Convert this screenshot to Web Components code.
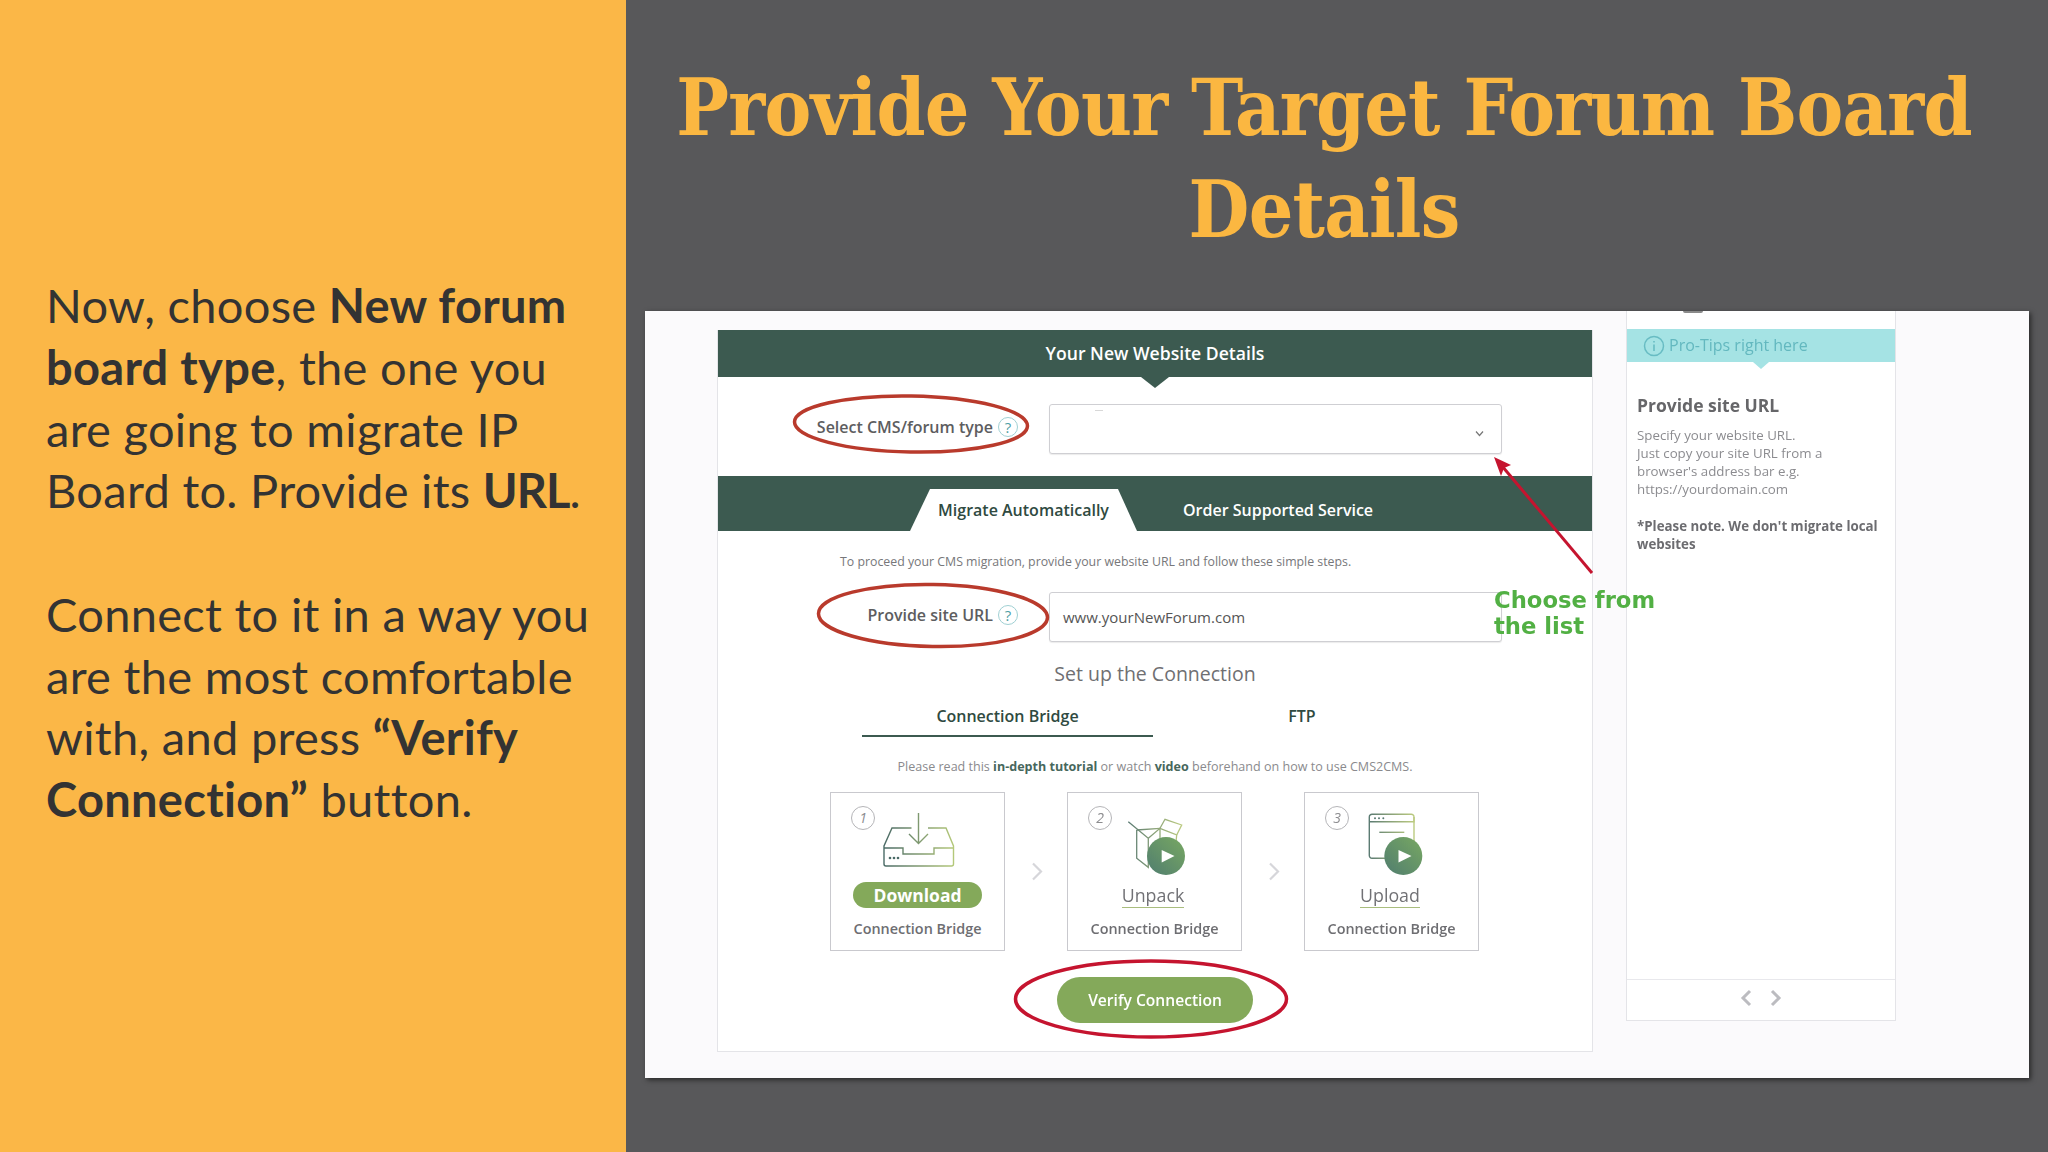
<!DOCTYPE html>
<html>
<head>
<meta charset="utf-8">
<title>Provide Your Target Forum Board Details</title>
<style>
html,body{margin:0;padding:0;background:#58585a;}
</style>
</head>
<body>
<migration-slide>
  <side-note slot="side">
    <p>Now, choose <b>New forum<br>board type</b>, the one you<br>are going to migrate IP<br>Board to. Provide its <b style="letter-spacing:-1px">URL</b>.</p>
    <p>Connect to it in a way you<br>are the most comfortable<br>with, and press <b>“Verify<br>Connection”</b> button.</p>
  </side-note>
  <slide-title slot="title">Provide Your Target Forum Board<br>Details</slide-title>
  <wizard-shot slot="shot">
    <wizard-form></wizard-form>
    <tips-panel slot="tips"></tips-panel>
  </wizard-shot>
</migration-slide>

<script>
function define(name, html){
    const tpl = document.createElement('template');
    tpl.innerHTML = html;
    customElements.define(name, class extends HTMLElement{
        constructor(){
            super();
            this.attachShadow({mode: 'open'});
            this.shadowRoot.appendChild(tpl.content.cloneNode(true));
        }
    });
}

define('migration-slide', `
<style>
:host{display:grid;grid-template-columns:626px 1422px;width:2048px;height:1152px;overflow:hidden;}
.right{background:#58585a;display:flex;flex-direction:column;padding-left:19px;}
</style>
<slot name="side"></slot>
<div class="right">
  <slot name="title"></slot>
  <slot name="shot"></slot>
</div>`);

define('side-note', `
<style>
:host{display:block;box-sizing:border-box;background:#fbb747;color:#333;padding:275px 0 0 46px;
  font:400 47px/61.75px Lato,sans-serif;letter-spacing:.3px;}
::slotted(p){margin:0 0 61.75px;}
</style>
<slot></slot>`);

define('slide-title', `
<style>
:host{display:block;height:311px;box-sizing:border-box;margin-left:-19px;padding:57px 26px 0 0;text-align:center;
  color:#fbb741;font:700 78px/102px "DejaVu Serif Condensed","DejaVu Serif",serif;letter-spacing:-.76px;}
</style>
<slot></slot>`);

define('wizard-shot', `
<style>
:host{display:flex;position:relative;align-items:flex-start;width:1384px;box-sizing:border-box;padding:19px 0 26px 72px;
  gap:33px;background:#fbfafc;box-shadow:2px 2px 5px rgba(0,0,0,.55);filter:blur(.45px);}
.notes{position:absolute;inset:0;pointer-events:none;}
.notes svg{position:absolute;left:0;top:0;}
.hint{position:absolute;left:849px;top:276px;color:#52b044;font:700 22.7px/26px "DejaVu Sans",sans-serif;}
</style>
<slot></slot>
<slot name="tips"></slot>
<div class="notes">
  <svg width="1384" height="757" viewBox="0 0 1384 757" fill="none">
    <ellipse cx="266" cy="113" rx="116.5" ry="28" stroke="#b93a2c" stroke-width="3.5" transform="rotate(1 266 113)"/>
    <ellipse cx="288" cy="304.5" rx="114.5" ry="31" stroke="#b93a2c" stroke-width="3.5" transform="rotate(1 288 304)"/>
    <ellipse cx="506" cy="688" rx="135.5" ry="38" stroke="#c5142f" stroke-width="3.5"/>
    <path d="M947 262L857 155" stroke="#c5142f" stroke-width="3"/>
    <path d="M849 146L866 154L859 157L856 165Z" fill="#c5142f"/>
  </svg>
  <div class="hint">Choose from<br>the list</div>
</div>`);

define('help-mark', `
<style>
:host{display:inline-flex;align-items:center;justify-content:center;box-sizing:border-box;width:20px;height:20px;
  border:1px solid #9fd0d3;border-radius:50%;color:#4f9fa5;font:400 15px/1 "Open Sans",sans-serif;flex:none;}
</style>?`);

define('wizard-form', `
<style>
:host{display:block;box-sizing:border-box;width:876px;height:722px;background:#fff;border:solid #e4e4e8;border-width:0 1px 1px 1px;
  font-family:"Open Sans",sans-serif;color:#6b6b6e;}
.head{position:relative;height:47px;background:#3c5a50;color:#fff;font:600 17.6px/47px "Open Sans",sans-serif;text-align:center;}
.head::after{content:"";position:absolute;left:50%;top:47px;margin-left:-14px;border:solid transparent;border-width:11px 14px 0;border-top-color:#3c5a50;}
.row{display:grid;grid-template-columns:331px 453px;height:50px;}
.row.first{margin-top:27px;}
.row.second{margin-top:21px;}
.label{display:flex;align-items:center;justify-content:flex-end;gap:5px;padding:0 31px 4px 0;font:600 16px/20px "Open Sans",sans-serif;color:#5d5d60;}
.field{box-sizing:border-box;border:1px solid #cfcfd3;border-radius:3px;box-shadow:0 1px 1px rgba(0,0,0,.08);display:flex;background:#fff;
  font:400 15px/48px "Open Sans",sans-serif;color:#555;padding-left:13px;}
.select{position:relative;}
.select i{display:block;width:8px;height:1px;background:#d8d8d8;margin:5px 0 0 32px;}
.select svg{position:absolute;right:17px;top:25px;}
.band{display:flex;align-items:flex-end;margin-top:22px;height:55px;background:#3c5a50;padding-left:192px;}
.tab{width:227px;height:42px;box-sizing:border-box;background:#fff;clip-path:polygon(20px 0,208px 0,100% 100%,0 100%);
  text-align:center;font:600 16px/42px "Open Sans",sans-serif;color:#2f4a41;}
.other{margin-left:46px;color:#fff;font:600 16px/42px "Open Sans",sans-serif;}
.intro{margin:22px 0 0 122px;font:400 12.33px/18px "Open Sans",sans-serif;color:#77777a;}
.setup{margin-top:18px;text-align:center;font:400 19.5px/28px "Open Sans",sans-serif;color:#6f6f72;}
.tabs{display:flex;margin:14px 0 0 144px;height:35px;}
.tabs div{font:600 16px/28px "Open Sans",sans-serif;color:#2f4a41;text-align:center;}
.tabs .on{width:291px;border-bottom:2px solid #3c5a50;box-sizing:border-box;}
.tabs .off{width:298px;}
.read{margin-top:21px;text-align:center;font:400 12.55px/18px "Open Sans",sans-serif;color:#8a8a8d;}
.read b{font-weight:700;color:#47675c;}
.steps{display:flex;margin:16px 0 0 112px;}
.gap{width:62px;box-sizing:border-box;padding-left:2px;display:flex;align-items:center;justify-content:center;}
.verify{display:block;margin:26px auto 0;width:196px;height:46px;border-radius:23px;background:#84a95a;color:#fff;text-align:center;
  font:600 15.6px/46px "Open Sans",sans-serif;}
</style>
<div class="head">Your New Website Details</div>
<div class="row first">
  <div class="label">Select CMS/forum type <help-mark></help-mark></div>
  <div class="field select"><i></i><svg width="9" height="7" viewBox="0 0 9 7" fill="none"><path d="M1 1.5L4.5 5.5L8 1.5" stroke="#777" stroke-width="1.2"/></svg></div>
</div>
<div class="band">
  <div class="tab">Migrate Automatically</div>
  <div class="other">Order Supported Service</div>
</div>
<div class="intro">To proceed your CMS migration, provide your website URL and follow these simple steps.</div>
<div class="row second">
  <div class="label">Provide site URL <help-mark></help-mark></div>
  <div class="field">www.yourNewForum.com</div>
</div>
<div class="setup">Set up the Connection</div>
<div class="tabs"><div class="on">Connection Bridge</div><div class="off">FTP</div></div>
<div class="read">Please read this <b>in-depth tutorial</b> or watch <b>video</b> beforehand on how to use CMS2CMS.</div>
<div class="steps">
  <step-card num="1" label="Download" class="pill">
    <svg width="80" height="60" viewBox="0 0 80 60" fill="none">
      <defs><linearGradient id="a" gradientUnits="userSpaceOnUse" x1="6" y1="0" x2="76" y2="0"><stop offset="0" stop-color="#4a6a66"/><stop offset="1" stop-color="#b5c97a"/></linearGradient></defs>
      <g stroke="url(#a)" stroke-width="1.4">
        <path d="M33.5 16H14L6 34V52a2 2 0 0 0 2 2H73.5a2 2 0 0 0 2-2V34L68 16H50"/>
        <path d="M6 36H25V42H56V36H75.5"/>
        <path d="M40.5 1V31M31 22L40.5 31.5L50 22"/>
      </g>
      <g fill="#4a6a66"><circle cx="12" cy="46" r="1.3"/><circle cx="16" cy="46" r="1.3"/><circle cx="20" cy="46" r="1.3"/></g>
    </svg>
  </step-card>
  <div class="gap"><svg width="12" height="19" viewBox="0 0 12 19" fill="none"><path d="M2 1.5L10 9.5L2 17.5" stroke="#d6d6da" stroke-width="2.2"/></svg></div>
  <step-card num="2" label="Unpack">
    <svg width="80" height="60" viewBox="0 0 80 60" fill="none">
      <defs>
        <linearGradient id="b" gradientUnits="userSpaceOnUse" x1="13" y1="0" x2="67" y2="0"><stop offset="0" stop-color="#5a7a72"/><stop offset="1" stop-color="#bccb80"/></linearGradient>
        <linearGradient id="p2" x1="0" y1="1" x2="1" y2="0"><stop offset="0" stop-color="#507d6f"/><stop offset="1" stop-color="#78a862"/></linearGradient>
      </defs>
      <g stroke="url(#b)" stroke-width="1.3">
        <path d="M13.3 9.7L33.3 26.3V55.3L21.7 46.3V18"/>
        <path d="M21.7 18L45 16.3L61.7 23L60 40"/>
        <path d="M33.3 26.3L45 16.3V30"/>
        <path d="M45 16.3L50 7.3L66.7 13L61.7 23"/>
      </g>
      <circle cx="51" cy="44" r="19" fill="url(#p2)"/>
      <path d="M46.7 38V50.5L59.5 44Z" fill="#fff"/>
    </svg>
  </step-card>
  <div class="gap"><svg width="12" height="19" viewBox="0 0 12 19" fill="none"><path d="M2 1.5L10 9.5L2 17.5" stroke="#d6d6da" stroke-width="2.2"/></svg></div>
  <step-card num="3" label="Upload">
    <svg width="80" height="60" viewBox="0 0 80 60" fill="none">
      <defs>
        <linearGradient id="c" gradientUnits="userSpaceOnUse" x1="17" y1="0" x2="62" y2="0"><stop offset="0" stop-color="#5a7a72"/><stop offset="1" stop-color="#bccb80"/></linearGradient>
        <linearGradient id="p3" x1="0" y1="1" x2="1" y2="0"><stop offset="0" stop-color="#507d6f"/><stop offset="1" stop-color="#78a862"/></linearGradient>
      </defs>
      <g stroke="url(#c)" stroke-width="1.4">
        <path d="M17.3 9.7H62V5a2.7 2.7 0 0 0-2.7-2.7H20a2.7 2.7 0 0 0-2.7 2.7V43.6a2.7 2.7 0 0 0 2.7 2.7H34"/>
        <path d="M62 5V30"/>
        <path d="M27.3 20.3H52.3"/>
      </g>
      <g fill="#5a7a72"><circle cx="23" cy="6.3" r="1"/><circle cx="27" cy="6.3" r="1"/><circle cx="31.3" cy="6.3" r="1"/></g>
      <circle cx="51.3" cy="44" r="19" fill="url(#p3)"/>
      <path d="M46.5 38V50.5L59.5 44Z" fill="#fff"/>
    </svg>
  </step-card>
</div>
<div class="verify">Verify Connection</div>`);

class StepCard extends HTMLElement{
    constructor(){
        super();
        this.attachShadow({mode: 'open'});
        this.shadowRoot.innerHTML = `
<style>
:host{display:flex;flex-direction:column;align-items:center;position:relative;box-sizing:border-box;width:175px;height:159px;
  border:1px solid #c9c9ce;padding-top:19px;background:#fff;}
.num{position:absolute;left:20px;top:13px;width:24px;height:24px;box-sizing:border-box;border:1px solid #b5b5b8;border-radius:50%;
  font:italic 400 14px/22px "Open Sans",sans-serif;color:#8c8c8f;text-align:center;background:#fff;}
.slot{height:60px;}
::slotted(svg){overflow:visible;display:block;}
.label{margin:10px 3px 0 0;height:26px;box-sizing:border-box;font:400 17.8px/26px "Open Sans",sans-serif;color:#717175;}
.line{height:25px;margin-bottom:1px;border-bottom:1.5px solid #a9bd7d;}
:host(.pill) .label{width:129px;margin:10px 0 0;border-radius:13px;background:#84a95a;color:#fff;font-weight:700;text-align:center;font-size:17.5px;line-height:27px;}
.cap{margin-top:11px;font:600 14.4px/20px "Open Sans",sans-serif;color:#6e6e72;}
</style>
<div class="num">${this.getAttribute('num')}</div>
<div class="slot"><slot></slot></div>
<div class="label"><div class="${this.classList.contains('pill') ? '' : 'line'}">${this.getAttribute('label')}</div></div>
<div class="cap">Connection Bridge</div>`;
    }
}
customElements.define('step-card', StepCard);

define('tips-panel', `
<style>
:host{display:flex;flex-direction:column;box-sizing:border-box;width:270px;height:710px;margin-top:-19px;background:#fff;
  border:solid #e4e4e8;border-width:0 1px 1px 1px;font-family:"Open Sans",sans-serif;}
.cut{position:relative;height:18px;}
.cut i{position:absolute;left:56px;top:0;width:20px;height:2px;background:#8a8a8a;border-radius:0 0 10px 10px;}
.bar{position:relative;display:flex;align-items:center;gap:4px;height:33px;padding-left:16px;background:#a5e3e4;color:#63b8bf;
  font:400 16px/33px "Open Sans",sans-serif;}
.bar::after{content:"";position:absolute;left:50%;top:33px;margin-left:-8px;border:solid transparent;border-width:7px 8px 0;border-top-color:#a5e3e4;}
.body{flex:1;padding:31px 8px 0 10px;}
h3{margin:0;font:700 17.5px/24px "Open Sans",sans-serif;color:#666669;}
p{margin:9px 0 0;font:400 13.3px/18px "Open Sans",sans-serif;color:#8c8c90;}
p.note{margin-top:19px;font-weight:700;color:#6c6c70;}
.foot{display:flex;justify-content:center;align-items:center;gap:18px;height:41px;box-sizing:border-box;border-top:1.5px solid #e8e8ec;padding-bottom:4px;}
</style>
<div class="cut"><i></i></div>
<div class="bar">
  <svg width="22" height="22" viewBox="0 0 22 22" fill="none"><circle cx="11" cy="11" r="9.5" stroke="#68bcc3" stroke-width="1.5"/><path d="M11 9.5V16M11 6V7.6" stroke="#68bcc3" stroke-width="1.6"/></svg>
  <span>Pro-Tips right here</span>
</div>
<div class="body">
  <h3>Provide site URL</h3>
  <p>Specify your website URL.<br>Just copy your site URL from a<br>browser's address bar e.g.<br>https://yourdomain.com</p>
  <p class="note">*Please note. We don't migrate local websites</p>
</div>
<div class="foot">
  <svg width="12" height="18" viewBox="0 0 12 18" fill="none"><path d="M10 2L3 9L10 16" stroke="#bcbcc0" stroke-width="3"/></svg>
  <svg width="12" height="18" viewBox="0 0 12 18" fill="none"><path d="M2 2L9 9L2 16" stroke="#bcbcc0" stroke-width="3"/></svg>
</div>`);
</script>
</body>
</html>
